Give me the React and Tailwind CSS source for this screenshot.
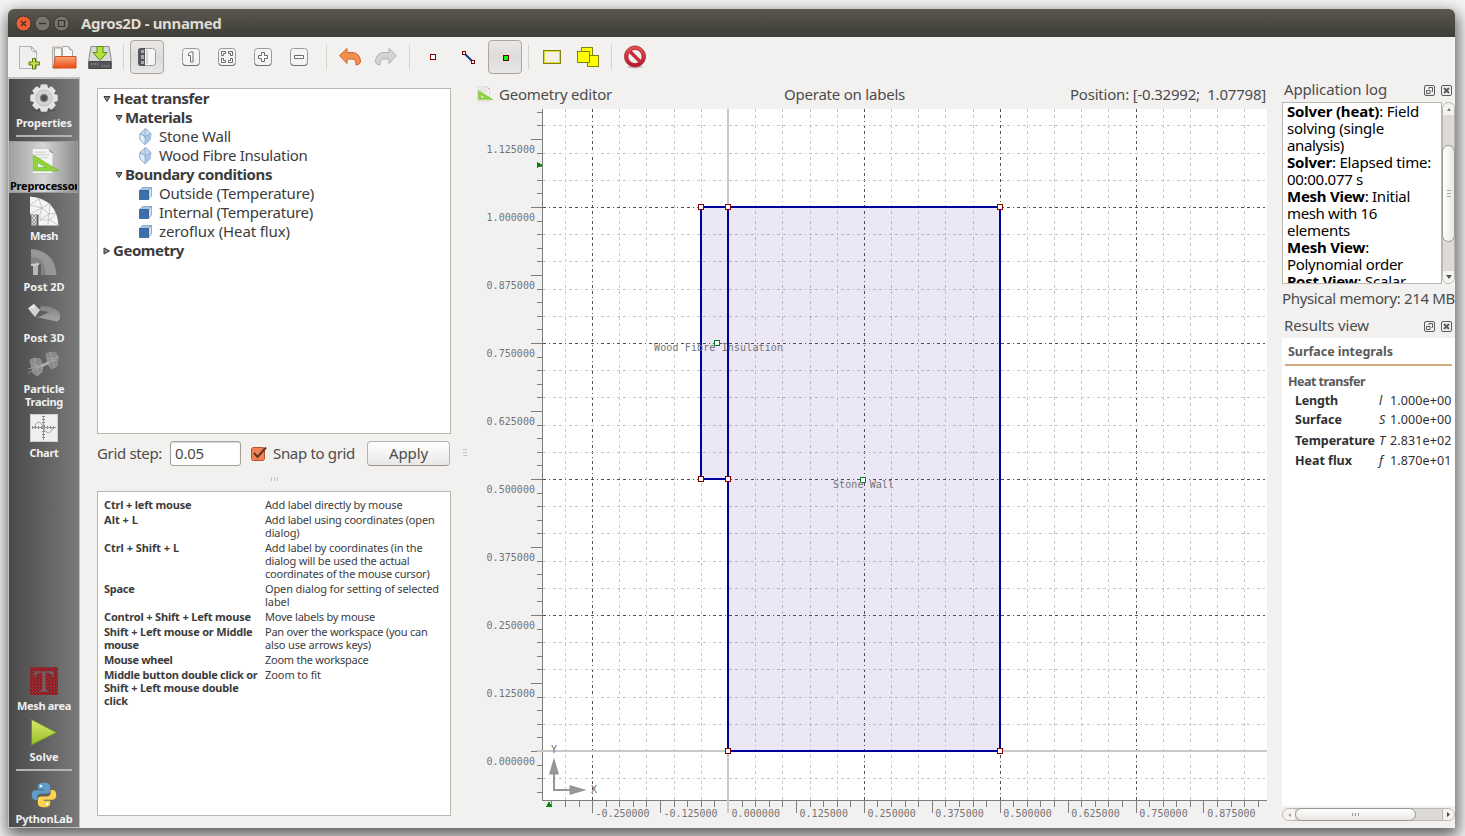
import React, { useLayoutEffect, useRef, useState } from "react";

// Single line of text whose tracking is adjusted so that it spans `w` pixels.
function T({ w, className = "", children }) {
  const ref = useRef(null);
  const [ls, setLs] = useState(0);
  useLayoutEffect(() => {
    const el = ref.current;
    const n = el.textContent.length;
    if (w && n) setLs((w - el.getBoundingClientRect().width) / n);
  }, [w]);
  return (
    <span ref={ref} className={`inline-block whitespace-pre ${className}`} style={{ letterSpacing: `${ls}px` }}>
      {children}
    </span>
  );
}

/* ---------- toolbar ---------- */

function Slot({ w = "w-9", pressed, children }) {
  return (
    <div className={`flex h-9 shrink-0 items-center justify-center ${w}`}>
      {pressed ? (
        <div className="flex h-[34px] w-[34px] items-center justify-center rounded-[4px] border border-[#a9a6a1] bg-linear-to-b from-[#e9e8e7] via-[#dddcda] to-[#e8e7e6]">
          {children}
        </div>
      ) : (
        children
      )}
    </div>
  );
}

function Sep({ w = "w-[11px] justify-center" }) {
  return (
    <div className={`flex h-9 shrink-0 items-center ${w}`}>
      <div className="h-6 w-px bg-[#d3d1ce]" />
    </div>
  );
}

function KeyIcon({ children }) {
  return (
    <svg width="20" height="20" viewBox="0 0 20 20">
      <rect x="1.5" y="1.5" width="17" height="17" rx="3" fill="#f4f4f3" stroke="#9b9b99" />
      <path d="M2 16.5q.5 2 2.500 2h11q2 0 2.500-2" fill="none" stroke="#6e6e6c" />
      <g fill="#fff" stroke="#6a6a68">{children}</g>
    </svg>
  );
}

function Toolbar() {
  return (
    <div className="flex h-10 shrink-0 items-center pl-[3px]">
      <Slot>
        <svg width="24" height="26" viewBox="0 0 24 26">
          <path d="M2.500 2.500h12l5 5v17h-17z" fill="#efefee" stroke="#b3b3b1" />
          <path d="M14 2.500q0 6 5.500 5.500z" fill="#fff" stroke="#a5a5a3" />
          <path d="M15.500 14.500h3v3.500h4v3h-4v4h-3v-4h-3.500v-3h3.500z" fill="#c8e04a" stroke="#4f7d10" />
        </svg>
      </Slot>
      <Slot w="w-[35px]">
        <svg width="26" height="26" viewBox="0 0 26 26" className="-translate-x-px">
          <defs>
            <linearGradient id="fo" x2="0" y2="1">
              <stop stopColor="#f9a87c" />
              <stop offset="1" stopColor="#ec4a12" />
            </linearGradient>
          </defs>
          <path d="M1.500 24v-21h8v21z" fill="#f3d9c8" stroke="#b5b2ae" />
          <path d="M3.500 20v-16h7v16zM11.500 20V2.500h6l4 4v14z" fill="#f6f6f5" stroke="#a8a8a6" />
          <path d="M17.500 2.500q0 4 4 4" fill="#ddd" stroke="#a8a8a6" />
          <path d="M4.500 12.500h20.500v11.500H2.500z" fill="url(#fo)" stroke="#d0511f" />
        </svg>
      </Slot>
      <Slot>
        <svg width="26" height="26" viewBox="0 0 26 26">
          <path d="M4 2.500h18l2.500 15v7h-23v-7z" fill="#d8d8d7" stroke="#8b8b89" />
          <path d="M2 17.500h22v7H2z" fill="#55565a" stroke="#444" />
          <path d="M15 22h7M4 20h8" stroke="#aaa" strokeDasharray="1 1" />
          <path d="M10 2.500h6v6h4L13 16.500 6 8.500h4z" fill="#b5dd3c" stroke="#579015" />
        </svg>
      </Slot>
      <Sep />
      <Slot pressed>
        <svg width="20" height="20" viewBox="0 0 20 20">
          <rect x="1.500" y="1.500" width="17" height="17" rx="3" fill="#f6f6f5" stroke="#9b9b99" />
          <path d="M1 4q0-3 3-3h4v18H4q-3 0-3-3z" fill="#55555a" />
          <path d="M4 3h3v3H4zM4 8h3v4H4zM4 14h3v3H4z" fill="#a9a9a9" />
          <path d="M10 3v14" stroke="#d5d5d3" strokeWidth="2" />
        </svg>
      </Slot>
      <div className="w-2 shrink-0" />
      <Slot>
        <KeyIcon>
          <path d="M7.500 6.500l2-1.500h2.500v10H9.500V8.500h-2z" />
        </KeyIcon>
      </Slot>
      <Slot>
        <KeyIcon>
          <path d="M4.500 4.500h4v2h-2v2h-2zM11.500 4.500h4v4h-2v-2h-2zM4.500 11.500h2v2h2v2h-4zM13.500 11.500h2v4h-4v-2h2z" />
        </KeyIcon>
      </Slot>
      <Slot>
        <KeyIcon>
          <path d="M8.500 5.500h3v3h3v3h-3v3h-3v-3h-3v-3h3z" />
        </KeyIcon>
      </Slot>
      <Slot>
        <KeyIcon>
          <path d="M5.500 8.500h9v3h-9z" />
        </KeyIcon>
      </Slot>
      <Sep w="w-[15px] pl-[9px]" />
      <Slot>
        <svg width="24" height="20" viewBox="0 0 24 20">
          <path d="M1.500 8.500L9 1.500v4h5c5 0 8.500 3.500 8.500 9.500q-1 3-4.500 3c0-4.500-1.500-6-5-6H9v4.500z" fill="#f18f4c" stroke="#cf6430" strokeLinejoin="round" />
        </svg>
      </Slot>
      <Slot>
        <svg width="24" height="20" viewBox="0 0 24 20">
          <path d="M22.500 8.500L15 1.500v4h-5c-5 0-8.500 3.500-8.500 9.500q1 3 4.500 3c0-4.500 1.500-6 5-6h4v4.500z" fill="#d4d4d3" stroke="#b1b1af" strokeLinejoin="round" />
        </svg>
      </Slot>
      <Sep />
      <Slot>
        <svg width="6" height="6" viewBox="0 0 6 6">
          <rect x=".5" y=".5" width="5" height="5" fill="#fff" stroke="#800000" />
        </svg>
      </Slot>
      <Slot>
        <svg width="14" height="14" viewBox="0 0 14 14" className="translate-y-px">
          <path d="M2.500 2.500l9 9" stroke="#0b3a80" strokeWidth="2" />
          <rect x=".5" y=".5" width="3" height="3" fill="#fff" stroke="#800000" />
          <rect x="9.500" y="9.500" width="3" height="3" fill="#fff" stroke="#800000" />
        </svg>
      </Slot>
      <Slot pressed>
        <svg width="6" height="6" viewBox="0 0 6 6" className="translate-x-px translate-y-px">
          <rect x=".5" y=".5" width="5" height="5" fill="#0f0" stroke="#700000" />
        </svg>
      </Slot>
      <Sep />
      <Slot>
        <svg width="20" height="16" viewBox="0 0 20 16">
          <rect x="1.500" y="1.500" width="17" height="13" fill="#f2f1e4" stroke="#84820f" />
          <rect x="2.500" y="2.500" width="15" height="11" fill="none" stroke="#d8d83a" />
        </svg>
      </Slot>
      <Slot>
        <svg width="24" height="20" viewBox="0 0 24 20">
          <g fill="#ff0" stroke="#84820f">
            <rect x="5.500" y=".5" width="11" height="11" />
            <rect x="11.500" y="8.500" width="11" height="11" />
            <rect x="1.500" y="4.500" width="12" height="11" />
          </g>
        </svg>
      </Slot>
      <Sep />
      <Slot>
        <svg width="24" height="24" viewBox="0 0 24 24">
          <defs>
            <linearGradient id="no" x2="0" y2="1">
              <stop stopColor="#e8574a" />
              <stop offset="1" stopColor="#b51230" />
            </linearGradient>
          </defs>
          <ellipse cx="12" cy="22" rx="8" ry="1.500" fill="#c9c8c6" />
          <path fillRule="evenodd" d="M12 1a10.500 10.500 0 1 0 .01 0zM12 4.500a7 7 0 1 1-.01 0z" fill="url(#no)" stroke="#a8202e" strokeWidth=".8" />
          <path d="M7 6.500l10 10" stroke="#cc2a3a" strokeWidth="3.500" />
        </svg>
      </Slot>
    </div>
  );
}

/* ---------- sidebar ---------- */

function RulerIcon({ className = "h-7 w-8" }) {
  return (
    <svg viewBox="0 0 32 30" className={className}>
      <path d="M3.500 1.500h18l4 4v23h-22z" fill="#f3f3f2" stroke="#c4c4c2" />
      <path d="M21 1.500q1 5 5 5z" fill="#888" />
      <path d="M6 5.500h12M6 8.500h16M6 11.500h14" stroke="#c9c9c7" />
      <path fillRule="evenodd" d="M4.500 8.500L32 25.500H4.500zM9 16.500V22h9z" fill="#8fd43c" stroke="#62ad1f" strokeWidth=".6" />
    </svg>
  );
}

const GEAR = Array.from({ length: 8 }, (_, i) => i * 45);

const ICONS = {
  gear: (
    <svg width="30" height="30" viewBox="0 0 30 30">
      <ellipse cx="15" cy="27" rx="12" ry="2.500" fill="#444" opacity=".35" />
      {GEAR.map((a) => (
        <path key={a} d="M10.800 6l1-4.500q3.200-.6 6.400 0l1 4.500z" fill="#e4e4e4" transform={`rotate(${a} 15 15)`} />
      ))}
      <circle cx="15" cy="15" r="11" fill="#e4e4e4" />
      <circle cx="15" cy="15" r="8" fill="#d4d4d4" stroke="#bdbdbd" />
      <circle cx="15" cy="15" r="4.300" fill="#858585" />
      <circle cx="15" cy="15" r="3" fill="#4f4f4f" />
    </svg>
  ),
  ruler: <RulerIcon />,
  mesh: (
    <svg width="30" height="30" viewBox="0 0 30 30">
      <path d="M1 0.500Q28 3 29.500 29.500H9.500V18.500H1z" fill="#f4f4f3" />
      <path d="M2.500 18v11.500h5V18z" fill="#ddd" />
      <path d="M3 18l4 4-4 4 4 3M7 18l-4 4 4 4-4 3" stroke="#777" strokeWidth=".7" fill="none" />
      <path d="M1 9l9-6 3 9 8-5-1 11 7-1-6 7 8 5M13 12l7 6-9 6 10 0M1 9l12 3-12 6M11 24V18l2-6M20 18l-1 11" stroke="#b5b5b4" strokeWidth=".7" fill="none" />
    </svg>
  ),
  post2d: (
    <svg width="28" height="28" viewBox="0 0 28 28">
      <path d="M1 1Q25 3 26.500 27H12V16H1z" fill="#979797" />
      <path d="M1 9q14-1 15 18h-5V16H1z" fill="#838383" />
      <path d="M3 16h5v11H3z" fill="#b7b7b7" />
      <path d="M1 17l8-1" stroke="#cfcfcf" strokeWidth="2" />
    </svg>
  ),
  post3d: (
    <svg width="34" height="20" viewBox="0 0 34 20">
      <defs>
        <linearGradient id="p3" x2="0" y2="1">
          <stop stopColor="#818181" />
          <stop offset="1" stopColor="#a6a6a6" />
        </linearGradient>
      </defs>
      <path d="M9 14L14 3q14-1 19 8v5l-3 2.500z" fill="url(#p3)" />
      <path d="M8 14l3-7 11 2-9 4.500z" fill="#5e5e5e" />
      <path d="M1 5.500l6-4.500 6 6-5 7z" fill="#d2d2d2" />
      <path d="M1 5.500L7 1l1 4z" fill="#ececec" />
    </svg>
  ),
  particle: (
    <svg width="34" height="26" viewBox="0 0 34 26">
      <g fill="#8a8a8a" stroke="#979797" strokeWidth=".8">
        <path d="M3 9l4-2 6 1 3 6-1 7-5 4-4-3z" />
        <path d="M19 3l4-2 6 1 2 5-1 8-5 3-4-4z" />
      </g>
      <path d="M1 22L32 5M1 18l28-9M7 7l5 17M4 12l11 6M23 1l5 16M20 8l11-1" stroke="#a8a8a8" fill="none" strokeWidth=".8" />
      <path d="M14 15.500l8-4" stroke="#b4b4b4" strokeWidth="2" />
    </svg>
  ),
  chart: (
    <svg width="28" height="28" viewBox="0 0 28 28">
      <rect x=".5" y=".5" width="27" height="27" fill="#f0efee" stroke="#cfcfce" />
      <path d="M2 13.500h24M13.500 2v24" stroke="#999" strokeWidth="1" />
      <path d="M2 13.500h24M13.500 2v24" stroke="#8a8a8a" strokeWidth="3" strokeDasharray="1 2" />
      <path d="M4 13.500q4.500-11 9.500 0t9.500 0" fill="none" stroke="#a5a5a5" />
    </svg>
  ),
  area: (
    <svg width="28" height="28" viewBox="0 0 28 28">
      <defs>
        <pattern id="dots" width="3" height="3" patternUnits="userSpaceOnUse">
          <path d="M0 0h1v1H0zM2 1h1v1H2z" fill="#6c5254" />
        </pattern>
      </defs>
      <path d="M0 0h28v28H0z" fill="#9a1a1f" />
      <path d="M0 0h28v28H0z" fill="url(#dots)" />
      <path d="M4 4h20v6h-1.500q-1-4-4-4H16v16q0 1.500 3 1.500V25H9v-1.500q3 0 3-1.500V6H9.500q-3 0-4 4H4z" fill="#6f6162" stroke="#8c2225" strokeWidth=".6" />
    </svg>
  ),
  play: (
    <svg width="28" height="28" viewBox="0 0 28 28">
      <defs>
        <linearGradient id="pl" x2="0" y2="1">
          <stop stopColor="#dcea6a" />
          <stop offset="1" stopColor="#98bd2c" />
        </linearGradient>
      </defs>
      <path d="M1.500 1.500L26.500 14.500 1.500 27z" fill="url(#pl)" stroke="#6b8f2b" />
    </svg>
  ),
  python: (
    <svg width="26" height="26" viewBox="0 0 26 26" className="translate-y-px">
      <path d="M12.800.8c-4.500 0-6 1.600-6 3.700v2.800h6.400v1H4.200C1.800 8.300.7 10.300.7 13s1.300 5 3.200 5h2.500v-3c0-2.200 1.600-3.600 3.700-3.600h6c1.900 0 3-1.300 3-3V4.500C19.100 2.200 16.800.8 12.800.8z" fill="#5d9ccb" />
      <path d="M13.200 25.200c4.500 0 6-1.600 6-3.700v-2.800h-6.400v-1h9c2.400 0 3.500-2 3.500-4.700s-1.300-5-3.200-5h-2.500v3c0 2.200-1.600 3.600-3.700 3.600h-6c-1.900 0-3 1.300-3 3v3.900c0 2.300 2.300 3.700 6.300 3.700z" fill="#fbd351" />
      <circle cx="9.800" cy="4" r="1.200" fill="#fff" />
      <circle cx="16.200" cy="22" r="1.200" fill="#fff" />
    </svg>
  ),
};

function SideItem({ icon, lines, selected, h = "h-[51px]" }) {
  return (
    <div className={`flex shrink-0 flex-col items-center ${h} ${selected ? "-mt-0.5 mr-px h-[52px] overflow-hidden border border-[#9b9b9b] bg-linear-to-r from-[#a0a0a0] via-[#d6d6d6] to-[#8d8d8d] pt-px" : ""}`}>
      <div className="flex h-9 w-9 shrink-0 items-center justify-center">{ICONS[icon]}</div>
      {lines.map(([s, w]) => (
        <div key={s} className={`h-[13px] shrink-0 text-[11px] leading-[13px] font-bold ${selected ? "w-full text-black" : "text-[#f0f0f0]"}`}>
          <T w={w}>{s}</T>
        </div>
      ))}
    </div>
  );
}

function Rule({ m }) {
  return <div className={`mx-[7px] h-0.5 shrink-0 bg-[#b3b3b3] ${m}`} />;
}

function Sidebar() {
  return (
    <div className="flex w-[72px] shrink-0 flex-col overflow-hidden border border-t-2 border-[#c2c1bf] bg-linear-to-r from-[#4a4a4a] to-[#7a7a7a] pt-px">
      <SideItem icon="gear" lines={[["Properties", 56]]} />
      <Rule m="mt-1 mb-[6px]" />
      <SideItem icon="ruler" selected lines={[["Preprocessor", 69]]} h="" />
      <SideItem icon="mesh" lines={[["Mesh", 28]]} />
      <SideItem icon="post2d" lines={[["Post 2D", 41]]} />
      <SideItem icon="post3d" lines={[["Post 3D", 41]]} />
      <SideItem icon="particle" lines={[["Particle", 41], ["Tracing", 38]]} h="h-16" />
      <SideItem icon="chart" lines={[["Chart", 29]]} />
      <div className="grow" />
      <SideItem icon="area" lines={[["Mesh area", 54]]} />
      <SideItem icon="play" lines={[["Solve", 29]]} />
      <Rule m="mt-1 mb-[5px]" />
      <SideItem icon="python" lines={[["PythonLab", 57]]} />
    </div>
  );
}

/* ---------- left panel ---------- */

const Prism = (
  <svg width="13" height="17" viewBox="0 0 13 17">
    <path d="M6.500.5l5.500 5-1 6.500-5 4.500-5-4.500V5.500z" fill="#c5daf0" stroke="#7a9cc4" strokeWidth=".8" />
    <path d="M1 5.500l5 3 6-3-1 6.500-5 4.500z" fill="#a9c5e6" />
    <path d="M1 5.500l5 3v8l-5-4.500z" fill="#e4eef9" stroke="#7a9cc4" strokeWidth=".6" />
    <path d="M1 5.500l5 3 6-3M6 .5v8" stroke="#7a9cc4" strokeWidth=".6" fill="none" />
  </svg>
);

const Cube = (
  <svg width="13" height="13" viewBox="0 0 13 13">
    <path d="M.5 3.500l3-3h9l-3 3z" fill="#a9c5e6" stroke="#5a84b8" strokeWidth=".6" />
    <path d="M9.500 3.500l3-3V9l-3 3.500z" fill="#d3e2f3" stroke="#5a84b8" strokeWidth=".6" />
    <path d="M.5 3.500h9v9h-9z" fill="#3b70ad" stroke="#2d5a90" strokeWidth=".8" />
  </svg>
);

function Caret({ open }) {
  return (
    <svg width="8" height="8" viewBox="0 0 8 8" className="-ml-[0.5px] shrink-0">
      <path d={open ? "M1 1.500h6L4 6.500z" : "M1 1v6l5.500-3z"} fill="#8a8a8a" stroke="#3c3c3c" />
    </svg>
  );
}

const TREE = [
  { t: "Heat transfer", w: 96, pad: "pl-[5px]", open: true },
  { t: "Materials", w: 67, pad: "pl-[17px]", open: true },
  { t: "Stone Wall", w: 72, icon: Prism },
  { t: "Wood Fibre Insulation", w: 148.5, icon: Prism },
  { t: "Boundary conditions", w: 147, pad: "pl-[17px]", open: true },
  { t: "Outside (Temperature)", w: 155, icon: Cube },
  { t: "Internal (Temperature)", w: 154, icon: Cube },
  { t: "zeroflux (Heat flux)", w: 131, icon: Cube },
  { t: "Geometry", w: 71, pad: "pl-[5px]", open: false },
];

const HELP = [
  [[["Ctrl + left mouse", 87.5]], [["Add label directly by mouse", 137.5]]],
  [[["Alt + L", 34]], [["Add label using coordinates (open", 169.5], ["dialog)", 34.5]]],
  [[["Ctrl + Shift + L", 75]], [["Add label by coordinates (in the", 157.5], ["dialog will be used the actual", 144.5], ["coordinates of the mouse cursor)", 164.5]]],
  [[["Space", 30.5]], [["Open dialog for setting of selected", 174], ["label", 24.5]]],
  [[["Control + Shift + Left mouse", 147]], [["Move labels by mouse", 110]]],
  [[["Shift + Left mouse or Middle", 148.5], ["mouse", 34.5]], [["Pan over the workspace (you can", 162.5], ["also use arrows keys)", 106]]],
  [[["Mouse wheel", 68.5]], [["Zoom the workspace", 103.5]]],
  [[["Middle button double click or", 153.5], ["Shift + Left mouse double", 134.5], ["click", 24]], [["Zoom to fit", 56]]],
];

function LeftPanel() {
  return (
    <div className="mt-[11px] ml-[17px] flex w-[354px] shrink-0 flex-col text-[#3c3c3c]">
      <div className="h-[346px] shrink-0 border border-[#bab6b0] bg-white">
        {TREE.map((r) => (
          <div key={r.t} className={`flex h-[19px] items-center text-[15px] leading-[19px] ${r.icon ? "pl-[41px]" : `font-bold ${r.pad}`}`}>
            {r.icon ? <span className="mr-[7px] flex w-[13px] justify-center">{r.icon}</span> : <span className="mr-[2.5px] flex"><Caret open={r.open} /></span>}
            <T w={r.w}>{r.t}</T>
          </div>
        ))}
      </div>
      <div className="flex h-10 shrink-0 items-center pb-[2px] text-[15px] text-[#4c4c4c]">
        <T w={65}>Grid step:</T>
        <div className="ml-[8px] flex h-[25px] w-[71px] items-center rounded-[3px] border border-[#a39f99] bg-white pl-[4px] shadow-[inset_0_1px_1px_#d8d6d3]">
          <T w={29}>0.05</T>
        </div>
        <svg width="17" height="17" viewBox="0 0 17 17" className="ml-[9px]">
          <rect x="1.500" y="2.500" width="13" height="13" rx="2" fill="#f08352" stroke="#b5532b" />
          <path d="M4 8l3.500 4L16 2.500" fill="none" stroke="#5a3526" strokeWidth="1.900" />
        </svg>
        <T w={82} className="ml-[6px]">Snap to grid</T>
        <div className="ml-[12px] flex h-[25px] w-[83px] items-center justify-center rounded-[4px] border border-[#b5b1ac] border-b-[#96928c] bg-linear-to-b from-white to-[#e9e8e6]">
          <T w={39}>Apply</T>
        </div>
      </div>
      <div className="flex h-[17px] shrink-0 items-start justify-center gap-[2px] pt-[3px]">
        <i className="h-1 w-px bg-[#c4c2be]" />
        <i className="h-1 w-px bg-[#c4c2be]" />
        <i className="h-1 w-px bg-[#c4c2be]" />
      </div>
      <div className="h-[325px] shrink-0 border border-[#bab6b0] bg-white pt-[6px] pl-[6px] text-[11px] leading-[13px]">
        {HELP.map(([k, d]) => (
          <div key={k[0][0]} className="flex pb-[2px]">
            <div className="flex w-[161px] flex-col items-start font-bold">
              {k.map(([s, w]) => (
                <T key={s} w={w}>{s}</T>
              ))}
            </div>
            <div className="flex flex-col items-start">
              {d.map(([s, w]) => (
                <T key={s} w={w}>{s}</T>
              ))}
            </div>
          </div>
        ))}
      </div>
    </div>
  );
}

/* ---------- geometry view ---------- */

const range = (a, b) => Array.from({ length: b - a + 1 }, (_, i) => a + i);
const gx = (k) => Math.round(728 + 27.17 * k) + 0.5;
const gy = (k) => Math.round(751 - 27.2 * k) + 0.5;

function Geometry() {
  const vert = range(-6, 19).filter((k) => k !== 0);
  const horiz = range(-1, 23).filter((k) => k !== 0);
  return (
    <svg width="791" height="712" viewBox="476 109 791 712" shapeRendering="crispEdges" className="block">
      <path d="M476 109h791v712H476z" fill="#f1f1f2" />
      <path d="M542 109h725v691H542z" fill="#fff" />
      <g strokeDasharray="3 3 1 3 3 3">
        {vert.map((k) => (
          <path key={k} d={`M${gx(k)} 800V109`} stroke={k % 5 === 0 ? "#505050" : "#c6c6c6"} />
        ))}
        {horiz.map((k) => (
          <path key={k} d={`M543 ${gy(k)}H1265`} stroke={k % 5 === 0 ? "#505050" : "#c6c6c6"} />
        ))}
      </g>
      <g stroke="#7d7d7d">
        <path d="M542.500 109V800.500H1267" fill="none" />
        {range(-3, 47).map((k) => (
          <path key={k} d={`M${k % 5 === 0 ? 531 : 537} ${gy(k / 2)}H542`} />
        ))}
        {range(-13, 39).map((k) => (
          <path key={k} d={`M${gx(k / 2)} 801V${k % 5 === 0 ? 813 : 807}`} />
        ))}
      </g>
      <path d="M728 109V813M537 751H1267" stroke="#c8c8c8" strokeWidth="2" />
      <path d="M701 207H1000V751H728V479H701z" fill="#5030b0" fillOpacity=".115" />
      <path d="M701 207H1000V751H728V207M701 207V479H728" fill="none" stroke="#00009b" strokeWidth="2" />
      <g fill="#fff" stroke="#8b0000">
        {[[701, 207], [728, 207], [1000, 207], [701, 479], [728, 479], [728, 751], [1000, 751]].map(([x, y]) => (
          <rect key={`${x}-${y}`} x={x - 2.5} y={y - 2.5} width="5" height="5" />
        ))}
      </g>
      <g fill="#fff" stroke="#00851a">
        <rect x="714.500" y="340.500" width="5" height="5" />
        <rect x="860.500" y="477.500" width="5" height="5" />
      </g>
      <path d="M537 162v6l6-3zM546 807h6l-3-6z" fill="#008a00" />
      <g fill="#969696" shapeRendering="auto">
        <path d="M553 791V773h2v16h16v2zM554 757.500l5 17h-10zM586.500 790l-17 5v-10z" />
      </g>
      <g fill="#747474" fontSize="10" fontFamily="'DejaVu Sans Mono', monospace">
        {range(0, 9).map((k) => (
          <text key={k} x="486.500" y={Math.round(751 - 68 * k) + 14} textLength="48.500">{(k * 0.125).toFixed(6)}</text>
        ))}
        {range(-2, 7).map((k) => (
          <text key={k} x={728 + 67.95 * k + 3.5} y="817" textLength={k < 0 ? 54 : 48.5}>{(k * 0.125).toFixed(6)}</text>
        ))}
        <text x="654" y="351" textLength="129">Wood Fibre Insulation</text>
        <text x="833" y="488" textLength="61">Stone Wall</text>
        <text x="551" y="753">Y</text>
        <text x="591" y="793">X</text>
      </g>
    </svg>
  );
}

function Editor() {
  return (
    <div className="flex w-[791px] shrink-0 flex-col text-[#4c4c4c]">
      <div className="flex h-8 items-center pt-[2px] text-[15px]">
        <RulerIcon className="h-4 w-[17px]" />
        <T w={113} className="ml-[6px]">Geometry editor</T>
        <T w={121} className="ml-[172px]">Operate on labels</T>
        <T w={196} className="ml-[165px]">Position: [-0.32992;  1.07798]</T>
      </div>
      <Geometry />
    </div>
  );
}

/* ---------- right panel ---------- */

function DockTitle({ title, w }) {
  return (
    <div className="flex items-center pl-[2px] text-[15px] leading-[18px]">
      <T w={w} className="-mt-px mb-px">{title}</T>
      <svg width="28" height="11" viewBox="0 0 28 11" className="mr-[3px] -mb-px ml-auto shrink-0" fill="none" stroke="#5b5b5b">
        <rect x=".5" y=".5" width="10" height="10" rx="1.500" />
        <path d="M2.500 5.500h3.500v3h-3.500zM5 4V2.500h3.500v4H7.500" />
        <rect x="17.500" y=".5" width="10" height="10" rx="1.500" />
        <path d="M20 3l5 5M25 3l-5 5" strokeWidth="2" />
      </svg>
    </div>
  );
}

const LOG = [
  ["Solver (heat)", ": Field", 132],
  ["", "solving (single", 97],
  ["", "analysis)", 57],
  ["Solver", ": Elapsed time:", 144],
  ["", "00:00.077 s", 76],
  ["Mesh View", ": Initial", 123],
  ["", "mesh with 16", 90],
  ["", "elements", 63],
  ["Mesh View", ":", 82],
  ["", "Polynomial order", 116],
  ["Post View", ": Scalar", 119],
];

const RESULTS = [
  ["Length", 43, "l", "1.000e+00", "h-5"],
  ["Surface", 47, "S", "1.000e+00", "h-[19px]"],
  ["Temperature", 80, "T", "2.831e+02", "h-[22px]"],
  ["Heat flux", 57, "f", "1.870e+01", "h-[18px]"],
];

function RightPanel() {
  return (
    <div className="ml-[15px] flex w-[173px] shrink-0 flex-col pt-1 text-[#4c4c4c]">
      <DockTitle title="Application log" w={103} />
      <div className="mt-[3px] flex h-[182px] shrink-0">
        <div className="w-[160px] overflow-hidden border border-[#bab6b0] bg-white pl-[4px] text-[15px] text-black">
          {LOG.map(([b, s, w], i) => (
            <div key={i} className="h-[17px] leading-[16px]">
              <T w={w} className="align-top">
                <b>{b}</b>
                {s}
              </T>
            </div>
          ))}
        </div>
        <div className="flex w-[13px] flex-col items-center rounded-full border border-[#bab6b0] bg-[#dcdad8]">
          <div className="flex h-3 w-full items-center justify-center rounded-t-full bg-[#f4f3f2]">
            <svg width="4" height="3" viewBox="0 0 4 3"><path d="M0 3l2-3 2 3z" fill="#777" /></svg>
          </div>
          <div className="mt-[30px] flex h-[97px] w-[13px] flex-col items-center justify-center gap-[2px] rounded-full border border-[#9a9691] bg-linear-to-r from-white to-[#e8e7e5]">
            <i className="h-px w-[4px] bg-[#aaa]" />
            <i className="h-px w-[4px] bg-[#aaa]" />
            <i className="h-px w-[4px] bg-[#aaa]" />
          </div>
          <div className="mt-auto flex h-3 w-full items-center justify-center rounded-b-full bg-[#f4f3f2]">
            <svg width="6" height="4" viewBox="0 0 6 4"><path d="M0 0l3 4 3-4z" fill="#555" /></svg>
          </div>
        </div>
      </div>
      <div className="h-[33px] shrink-0 pt-[5px] text-[15px] leading-[18px]">
        <T w={173}>Physical memory: 214 MB</T>
      </div>
      <DockTitle title="Results view" w={85} />
      <div className="mt-[3px] h-[468px] shrink-0 bg-white pr-[3px] pl-[3px] text-[12.500px]">
        <div className="flex h-[28px] items-center border-b-2 border-[#cfab7c] pt-[2px] pl-[3px] font-bold text-[#5a5a5a]">
          <T w={105}>Surface integrals</T>
        </div>
        <div className="flex h-[25px] items-end pl-[3px] leading-[19px] font-bold text-[#5a5a5a]">
          <T w={77}>Heat transfer</T>
        </div>
        {RESULTS.map(([n, w, s, v, h]) => (
          <div key={n} className={`flex items-center pl-[10px] text-[#303030] ${h}`}>
            <b className="flex w-[84px]"><T w={w}>{n}</T></b>
            <i className="w-[11px]">{s}</i>
            <T w={61.5}>{v}</T>
          </div>
        ))}
      </div>
      <div className="mt-[2px] flex h-[13px] w-[173px] shrink-0 items-center rounded-full border border-[#bab6b0] bg-[#dcdad8]">
        <div className="flex h-full w-3 items-center justify-center rounded-l-full bg-[#f4f3f2]">
          <svg width="3" height="4" viewBox="0 0 3 4"><path d="M3 0L0 2l3 2z" fill="#aaa" /></svg>
        </div>
        <div className="flex h-[13px] w-[121px] shrink-0 items-center justify-center gap-[2px] rounded-full border border-[#9a9691] bg-linear-to-b from-white to-[#e8e7e5]">
          <i className="h-[3px] w-px bg-[#999]" />
          <i className="h-[3px] w-px bg-[#999]" />
          <i className="h-[3px] w-px bg-[#999]" />
        </div>
        <div className="ml-auto flex h-full w-3 items-center justify-center rounded-r-full border-l border-[#bab6b0] bg-[#f4f3f2]">
          <svg width="3" height="5" viewBox="0 0 3 5"><path d="M0 0l3 2.500L0 5z" fill="#444" /></svg>
        </div>
      </div>
    </div>
  );
}

/* ---------- window ---------- */

function TitleBar() {
  return (
    <div className="flex h-7 shrink-0 items-center rounded-t-[6px] bg-linear-to-b from-[#5a584f] to-[#3d3c37] pl-[6px]">
      <svg width="58" height="18" viewBox="0 0 58 18">
        <circle cx="9.500" cy="9.500" r="7.500" fill="#ec6039" stroke="#3a3833" />
        <path d="M7 7l5 5M12 7l-5 5" stroke="#4a2b20" strokeWidth="1.300" />
        <circle cx="28.500" cy="9.500" r="7.500" fill="#77756d" stroke="#3a3833" />
        <path d="M25 9.500h7" stroke="#35342f" strokeWidth="1.300" />
        <circle cx="47.500" cy="9.500" r="7.500" fill="#77756d" stroke="#3a3833" />
        <path d="M44.500 6.500h6v6h-6z" fill="none" stroke="#35342f" strokeWidth="1.200" />
      </svg>
      <T w={140.5} className="ml-[9px] text-[15px] leading-none font-bold text-[#dfdbd2]">Agros2D - unnamed</T>
    </div>
  );
}

export default function App() {
  return (
    <div className="h-[836px] w-[1465px] overflow-hidden bg-[#f4f4f4] pt-[9px] pl-2 font-['Noto_Sans','Open_Sans',sans-serif]">
      <div className="flex h-[819px] w-[1447px] flex-col rounded-t-[6px] bg-[#f2f1f0] shadow-[1px_6px_16px_2px_rgba(0,0,0,0.62)]">
        <TitleBar />
        <Toolbar />
        <div className="flex min-h-0 grow">
          <Sidebar />
          <LeftPanel />
          <div className="flex w-[25px] shrink-0 flex-col items-center pt-[372px] pl-[3px]">
            <div className="flex flex-col gap-[2px]">
              <i className="h-px w-1 bg-[#c4c2be]" />
              <i className="h-px w-1 bg-[#c4c2be]" />
              <i className="h-px w-1 bg-[#c4c2be]" />
            </div>
          </div>
          <Editor />
          <RightPanel />
        </div>
      </div>
    </div>
  );
}
